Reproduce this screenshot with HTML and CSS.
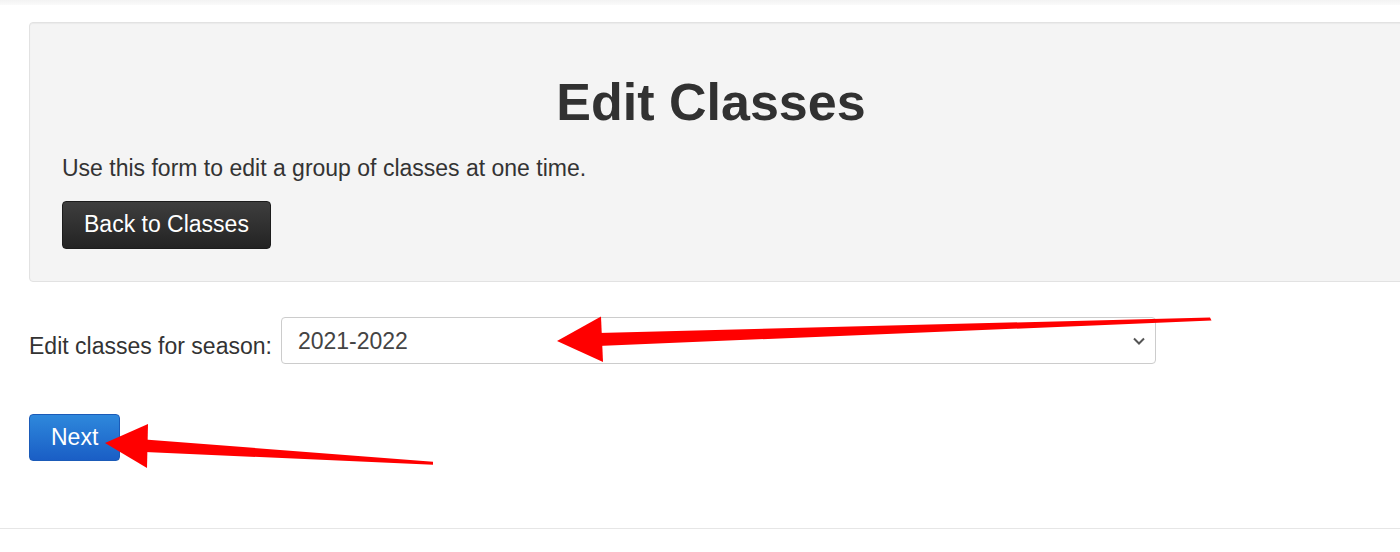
FILE: index.html
```html
<!DOCTYPE html>
<html lang="en">
<head>
<meta charset="utf-8">
<title>Edit Classes</title>
<link rel="stylesheet" href="styles.css">
</head>
<body>
<div class="topbar"></div>
<main class="page">
  <section class="well">
    <h1 class="title">Edit Classes</h1>
    <p class="intro">Use this form to edit a group of classes at one time.</p>
    <a class="btn btn-dark" href="#">Back to Classes</a>
  </section>
  <form class="season-form">
    <div class="field-row">
      <label class="field-label" for="season">Edit classes for season:</label>
      <div class="select-wrap">
        <select id="season" class="select">
          <option>2021-2022</option>
        </select>
        <svg class="chevron" width="12" height="8" viewBox="0 0 12 8"><polyline points="1,1.5 6,6.5 11,1.5" fill="none" stroke="#555" stroke-width="2"/></svg>
      </div>
    </div>
    <div class="actions">
      <button type="button" class="btn btn-blue">Next</button>
    </div>
  </form>
</main>
<footer class="footer"></footer>
<svg class="annotations" width="1400" height="552" viewBox="0 0 1400 552">
  <polygon points="598,333 1210,317.5 1211.5,320.5 598,346" fill="#ff0000"/>
  <polygon points="557,341 601,316.5 603,362" fill="#ff0000"/>
  <polygon points="145,439.5 433,461.8 433,464.8 145,452" fill="#ff0000"/>
  <polygon points="105,443 148,424 147,468" fill="#ff0000"/>
</svg>
</body>
</html>
```
FILE: styles.css
```css
html, body {
  margin: 0;
  padding: 0;
}
body {
  width: 1400px;
  height: 552px;
  overflow: hidden;
  position: relative;
  background: #ffffff;
  font-family: "Liberation Sans", Arial, sans-serif;
  color: #333333;
}
.topbar {
  height: 5px;
  background: linear-gradient(#f3f3f3, #fafafa);
}
.page {
  padding-left: 29px;
}
.well {
  margin-top: 17px;
  margin-right: -20px;
  padding: 19px 59px 32px 32px;
  background: #f4f4f4;
  border: 1px solid #e2e2e2;
  border-radius: 4px;
  box-shadow: inset 0 1px 1px rgba(0, 0, 0, 0.04);
}
.title {
  margin: 32px 0 21px;
  font-size: 52px;
  line-height: 57px;
  font-weight: bold;
  text-align: center;
  color: #313131;
}
.intro {
  margin: 0 0 16px;
  font-size: 23px;
  line-height: 33px;
}
.btn {
  display: inline-block;
  box-sizing: border-box;
  font-family: "Liberation Sans", Arial, sans-serif;
  font-size: 23px;
  line-height: 26px;
  border-radius: 4px;
  color: #ffffff;
  text-decoration: none;
  cursor: pointer;
}
.btn-dark {
  padding: 9px 21px 11px;
  background: linear-gradient(#3e3e3e, #232323);
  border: 1px solid #1c1c1c;
}
.btn-blue {
  padding: 9px 21px 10px;
  background: linear-gradient(#2e88dc, #1a5ec5);
  border: 1px solid #1b5bb8;
}
.season-form {
  margin: 35px 0 0;
}
.field-row {
  display: flex;
  align-items: flex-start;
  gap: 9px;
}
.field-label {
  padding-top: 16px;
  font-size: 23px;
  line-height: 26px;
  color: #333333;
}
.select-wrap {
  position: relative;
  width: 875px;
}
.select {
  appearance: none;
  -webkit-appearance: none;
  display: block;
  box-sizing: border-box;
  width: 100%;
  height: 47px;
  padding: 0 40px 0 16px;
  font-family: "Liberation Sans", Arial, sans-serif;
  font-size: 23px;
  color: #444444;
  background: #ffffff;
  border: 1px solid #cccccc;
  border-radius: 4px;
}
.chevron {
  position: absolute;
  right: 11px;
  top: 20px;
  pointer-events: none;
}
.actions {
  margin-top: 50px;
}
.footer {
  margin-top: 67px;
  border-top: 1px solid #e6e6e6;
}
.annotations {
  position: absolute;
  left: 0;
  top: 0;
  pointer-events: none;
}
```
